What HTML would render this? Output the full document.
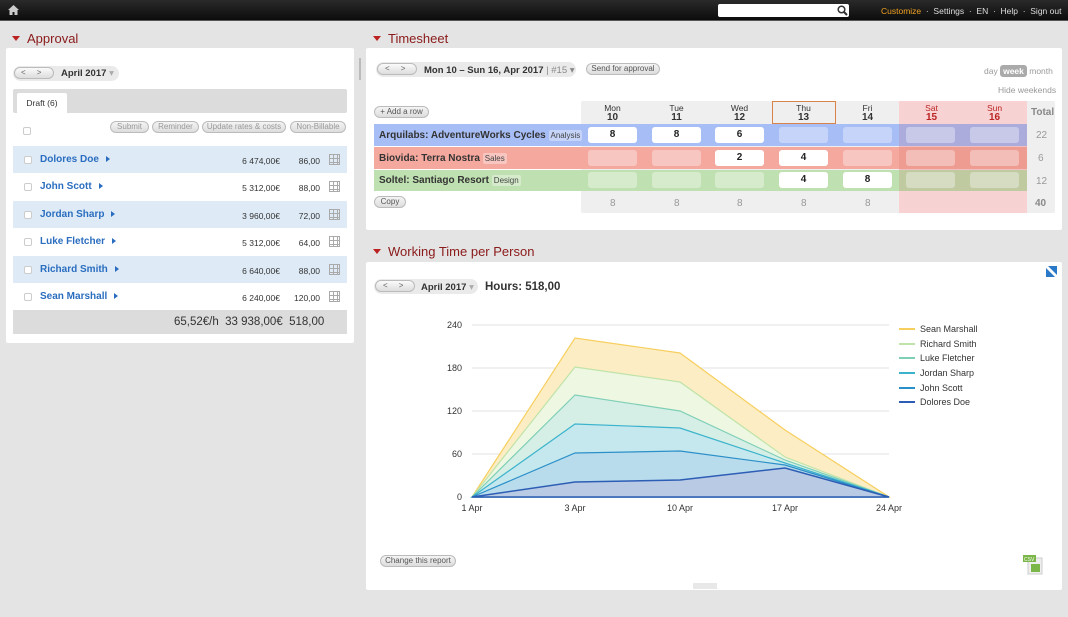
<!DOCTYPE html>
<html><head><meta charset="utf-8"><style>
*{box-sizing:border-box;margin:0;padding:0}
body{width:1068px;height:617px;background:#e4e4e4;font-family:"Liberation Sans",Arial,sans-serif;font-size:11px;color:#333;position:relative;overflow:hidden}
.abs{position:absolute}
.top{left:0;top:0;width:1068px;height:21px;background:linear-gradient(#2a2a2a,#0c0c0c);border-bottom:1px solid #555}
.search{left:718px;top:4px;width:131px;height:13px;background:#fff;border-radius:2px}
.nav{top:6px;color:#ddd;font-size:8.5px;white-space:nowrap}
.h{font-size:13px;color:#8b1a1a}
.h:before{content:"";display:inline-block;border-left:4px solid transparent;border-right:4px solid transparent;border-top:5px solid #b22;margin-right:7px;vertical-align:2px}
.panel{background:#fff;border-radius:2px}
.pill{background:linear-gradient(#f4f4f4,#ddd);border:1px solid #bbb;border-radius:9px;font-size:8px;color:#555;text-align:center;line-height:10px;height:12px;white-space:nowrap}
.pg{background:#eaeaea;border-radius:9px;height:15px}
.navbtn{border:1px solid #bbb;background:linear-gradient(#fafafa,#ddd);height:12px;border-radius:8px;width:40px}
.row{left:13px;width:334px;height:27px}
.name{color:#2a6dbf;font-weight:bold;font-size:10px;top:8px;left:27px}
.name:after{content:"";display:inline-block;border-top:3px solid transparent;border-bottom:3px solid transparent;border-left:4px solid #2a6dbf;margin-left:7px}
.cb{width:8px;height:8px;border:1px solid #ccc;border-radius:2px;background:#fff;left:11px;top:10px}
.num{font-size:8.5px;color:#333;top:10px;text-align:right}
.grid{width:11px;height:11px;top:8px;left:316px;background:
linear-gradient(90deg,transparent 3px,#aaa 3px,#aaa 4px,transparent 4px,transparent 7px,#aaa 7px,#aaa 8px,transparent 8px),
linear-gradient(transparent 3px,#aaa 3px,#aaa 4px,transparent 4px,transparent 7px,#aaa 7px,#aaa 8px,transparent 8px);border:1px solid #aaa}
.cell{width:49px;height:16px;border-radius:3px;background:#fff;font-weight:bold;font-size:10px;text-align:center;line-height:16px;color:#222;display:flex;align-items:center;justify-content:center}
.ghost{background:rgba(255,255,255,.35)}
.dh{text-align:center;font-size:8.5px;line-height:9px;width:63px}
.dh b{font-size:10px;display:block}
.tag{background:rgba(255,255,255,.35);font-size:8px;font-weight:normal;padding:1px 2px;border-radius:2px;color:#444}
</style></head><body>
<div class="abs top"></div>
<svg class="abs" style="left:8px;top:5px" width="11" height="10"><path d="M5.5 0L0 5h1.5v5h3V7h2v3h3V5H11z" fill="#ccc"/></svg>
<div class="abs search"></div>
<svg class="abs" style="left:837px;top:5px" width="11" height="11"><circle cx="4.5" cy="4.5" r="3.3" stroke="#333" stroke-width="1.5" fill="none"/><path d="M7 7l3 3" stroke="#333" stroke-width="2"/></svg>
<div class="abs nav" style="left:881px"><span style="color:#f0a020">Customize</span> &nbsp;·&nbsp; Settings &nbsp;·&nbsp; EN &nbsp;·&nbsp; Help &nbsp;·&nbsp; Sign out</div>

<div class="abs h" style="left:12px;top:31px">Approval</div>
<div class="abs panel" style="left:6px;top:48px;width:348px;height:295px"></div>
<div class="abs pg" style="left:13px;top:66px;width:106px"></div>
<div class="abs navbtn" style="left:14px;top:67px"></div>
<div class="abs" style="left:21px;top:68px;font-size:8px;color:#666">&lt; &nbsp;&nbsp;&nbsp; &gt;</div>
<div class="abs" style="left:61px;top:68px;font-size:9.5px;font-weight:bold">April 2017 <span style="color:#aaa;font-weight:normal">▾</span></div>
<div class="abs" style="left:13px;top:89px;width:334px;height:24px;background:#dcdcdc;border-radius:2px"></div>
<div class="abs" style="left:17px;top:93px;width:50px;height:21px;background:#fff;font-size:8.5px;text-align:center;line-height:20px;border-radius:2px 2px 0 0">Draft (6)</div>
<div class="abs cb" style="left:23px;top:127px"></div>
<div class="abs pill" style="left:110px;top:121px;width:39px;color:#999">Submit</div>
<div class="abs pill" style="left:152px;top:121px;width:47px;color:#999">Reminder</div>
<div class="abs pill" style="left:202px;top:121px;width:84px;color:#999">Update rates &amp; costs</div>
<div class="abs pill" style="left:290px;top:121px;width:56px;color:#999">Non-Billable</div>

<div class="abs row" style="top:146px;background:#deebf7"><div class="abs cb"></div><div class="abs name">Dolores Doe</div><div class="abs num" style="left:200px;width:67px">6 474,00€</div><div class="abs num" style="left:270px;width:37px">86,00</div><div class="abs grid"></div></div>
<div class="abs row" style="top:173px"><div class="abs cb"></div><div class="abs name">John Scott</div><div class="abs num" style="left:200px;width:67px">5 312,00€</div><div class="abs num" style="left:270px;width:37px">88,00</div><div class="abs grid"></div></div>
<div class="abs row" style="top:201px;background:#deebf7"><div class="abs cb"></div><div class="abs name">Jordan Sharp</div><div class="abs num" style="left:200px;width:67px">3 960,00€</div><div class="abs num" style="left:270px;width:37px">72,00</div><div class="abs grid"></div></div>
<div class="abs row" style="top:228px"><div class="abs cb"></div><div class="abs name">Luke Fletcher</div><div class="abs num" style="left:200px;width:67px">5 312,00€</div><div class="abs num" style="left:270px;width:37px">64,00</div><div class="abs grid"></div></div>
<div class="abs row" style="top:256px;background:#deebf7"><div class="abs cb"></div><div class="abs name">Richard Smith</div><div class="abs num" style="left:200px;width:67px">6 640,00€</div><div class="abs num" style="left:270px;width:37px">88,00</div><div class="abs grid"></div></div>
<div class="abs row" style="top:283px"><div class="abs cb"></div><div class="abs name">Sean Marshall</div><div class="abs num" style="left:200px;width:67px">6 240,00€</div><div class="abs num" style="left:270px;width:37px">120,00</div><div class="abs grid"></div></div>
<div class="abs" style="left:13px;top:310px;width:334px;height:24px;background:#dcdcdc"></div>
<div class="abs" style="left:174px;top:316px;font-size:11.5px;color:#333">65,52€/h &nbsp;33 938,00€ &nbsp;518,00</div>
<div class="abs" style="left:359px;top:58px;width:2px;height:22px;background:#bbb"></div>

<div class="abs h" style="left:373px;top:31px">Timesheet</div>
<div class="abs panel" style="left:366px;top:48px;width:696px;height:182px"></div>
<div class="abs pg" style="left:376px;top:62px;width:200px"></div>
<div class="abs navbtn" style="left:377px;top:63px"></div>
<div class="abs" style="left:385px;top:64px;font-size:8px;color:#666">&lt; &nbsp;&nbsp;&nbsp; &gt;</div>
<div class="abs" style="left:424px;top:65px;font-size:9.5px;font-weight:bold">Mon 10 – Sun 16, Apr 2017 <span style="color:#888;font-weight:normal">| #15 ▾</span></div>
<div class="abs pill" style="left:586px;top:63px;width:74px">Send for approval</div>
<div class="abs" style="left:984px;top:66px;font-size:8.5px;color:#999">day <span style="background:#aaa;color:#fff;font-weight:bold;padding:1px 3px;border-radius:3px">week</span> month</div>
<div class="abs" style="left:998px;top:85px;font-size:8.5px;color:#999">Hide weekends</div>
<div class="abs pill" style="left:374px;top:106px;width:55px">+ Add a row</div>

<div class="abs" style="left:581px;top:101px;width:474px;height:112px;background:#efefef;border-radius:2px"></div>
<div class="abs" style="left:899px;top:101px;width:128px;height:112px;background:#fbe0e0;background-image:radial-gradient(#efb0b0 0.6px,transparent 0.8px);background-size:2px 2px"></div>
<div class="abs dh" style="left:581px;top:104px">Mon<b>10</b></div>
<div class="abs dh" style="left:645px;top:104px">Tue<b>11</b></div>
<div class="abs dh" style="left:708px;top:104px">Wed<b>12</b></div>
<div class="abs" style="left:772px;top:101px;width:64px;height:23px;border:1px solid #d9834a"></div>
<div class="abs dh" style="left:772px;top:104px">Thu<b>13</b></div>
<div class="abs dh" style="left:836px;top:104px">Fri<b>14</b></div>
<div class="abs dh" style="left:900px;top:104px;color:#b22">Sat<b>15</b></div>
<div class="abs dh" style="left:963px;top:104px;color:#b22">Sun<b>16</b></div>
<div class="abs" style="left:1031px;top:107px;font-size:10px;font-weight:bold;color:#888">Total</div>

<div class="abs" style="left:374px;top:124px;width:653px;height:22px;background:#a6bdf5"></div>
<div class="abs" style="left:374px;top:147px;width:653px;height:22px;background:#f5a89e"></div>
<div class="abs" style="left:374px;top:170px;width:653px;height:21px;background:#bfe0b0"></div>
<div class="abs" style="left:899px;top:124px;width:128px;height:67px;background:rgba(200,80,80,.15)"></div>
<div class="abs" style="left:379px;top:130px;font-size:10px;font-weight:bold">Arquilabs: AdventureWorks Cycles <span class="tag">Analysis</span></div>
<div class="abs" style="left:379px;top:153px;font-size:10px;font-weight:bold">Biovida: Terra Nostra <span class="tag">Sales</span></div>
<div class="abs" style="left:379px;top:175px;font-size:10px;font-weight:bold">Soltel: Santiago Resort <span class="tag">Design</span></div>

<div class="abs cell" style="left:588px;top:127px">8</div>
<div class="abs cell" style="left:652px;top:127px">8</div>
<div class="abs cell" style="left:715px;top:127px">6</div>
<div class="abs cell ghost" style="left:779px;top:127px"></div>
<div class="abs cell ghost" style="left:843px;top:127px"></div>
<div class="abs cell ghost" style="left:906px;top:127px"></div>
<div class="abs cell ghost" style="left:970px;top:127px"></div>
<div class="abs cell ghost" style="left:588px;top:150px"></div>
<div class="abs cell ghost" style="left:652px;top:150px"></div>
<div class="abs cell" style="left:715px;top:150px">2</div>
<div class="abs cell" style="left:779px;top:150px">4</div>
<div class="abs cell ghost" style="left:843px;top:150px"></div>
<div class="abs cell ghost" style="left:906px;top:150px"></div>
<div class="abs cell ghost" style="left:970px;top:150px"></div>
<div class="abs cell ghost" style="left:588px;top:172px"></div>
<div class="abs cell ghost" style="left:652px;top:172px"></div>
<div class="abs cell ghost" style="left:715px;top:172px"></div>
<div class="abs cell" style="left:779px;top:172px">4</div>
<div class="abs cell" style="left:843px;top:172px">8</div>
<div class="abs cell ghost" style="left:906px;top:172px"></div>
<div class="abs cell ghost" style="left:970px;top:172px"></div>
<div class="abs" style="left:1036px;top:130px;font-size:10px;color:#999">22</div>
<div class="abs" style="left:1038px;top:153px;font-size:10px;color:#999">6</div>
<div class="abs" style="left:1036px;top:176px;font-size:10px;color:#999">12</div>
<div class="abs pill" style="left:374px;top:196px;width:32px">Copy</div>
<div class="abs" style="left:610px;top:198px;font-size:10px;color:#999">8</div>
<div class="abs" style="left:674px;top:198px;font-size:10px;color:#999">8</div>
<div class="abs" style="left:737px;top:198px;font-size:10px;color:#999">8</div>
<div class="abs" style="left:801px;top:198px;font-size:10px;color:#999">8</div>
<div class="abs" style="left:865px;top:198px;font-size:10px;color:#999">8</div>
<div class="abs" style="left:1035px;top:198px;font-size:10px;color:#888;font-weight:bold">40</div>

<div class="abs h" style="left:373px;top:244px">Working Time per Person</div>
<div class="abs panel" style="left:366px;top:262px;width:696px;height:328px"></div>
<svg class="abs" style="left:1046px;top:266px" width="11" height="11"><rect width="11" height="11" fill="#2a78c8"/><path d="M0 2L9 11H11V9L2 0H0z" fill="#fff"/></svg>
<div class="abs pg" style="left:374px;top:279px;width:104px"></div>
<div class="abs navbtn" style="left:375px;top:280px"></div>
<div class="abs" style="left:383px;top:281px;font-size:8px;color:#666">&lt; &nbsp;&nbsp;&nbsp; &gt;</div>
<div class="abs" style="left:421px;top:282px;font-size:9.5px;font-weight:bold">April 2017 <span style="color:#aaa;font-weight:normal">▾</span></div>
<div class="abs" style="left:485px;top:281px;font-size:11.5px;font-weight:bold">Hours: 518,00</div>

<svg class="abs" style="left:366px;top:262px" width="696" height="328" font-family="Liberation Sans, Arial, sans-serif" font-size="9" fill="#333">
<g stroke="#e0e0e0" stroke-width="1"><path d="M106 63H523M106 106H523M106 149H523M106 192H523"/></g>
<path d="M106 235H523" stroke="#999"/>
<g text-anchor="end"><text x="96" y="66">240</text><text x="96" y="109">180</text><text x="96" y="152">120</text><text x="96" y="195">60</text><text x="96" y="238">0</text></g>
<g text-anchor="middle"><text x="106" y="249">1 Apr</text><text x="209" y="249">3 Apr</text><text x="314" y="249">10 Apr</text><text x="419" y="249">17 Apr</text><text x="523" y="249">24 Apr</text></g>
<path d="M106 235L209 76L314 91L419 168L523 235Z" fill="#fcedc4" stroke="#f7cf5f" stroke-width="1.2"/>
<path d="M106 235L209 105L314 120L419 195L523 235Z" fill="#eef7e2" stroke="#bfe3a8" stroke-width="1.2"/>
<path d="M106 235L209 133L314 149L419 198L523 235Z" fill="#d6efe6" stroke="#7fcfb7" stroke-width="1.2"/>
<path d="M106 235L209 162L314 166L419 201L523 235Z" fill="#c5e8ee" stroke="#3cb3cc" stroke-width="1.2"/>
<path d="M106 235L209 191L314 189L419 203L523 235Z" fill="#b8dcec" stroke="#2b8fc8" stroke-width="1.2"/>
<path d="M106 235L209 220L314 218L419 206L523 235Z" fill="#b9cbe4" stroke="#2e5db5" stroke-width="1.5"/>
<g stroke-width="2"><path d="M533 67h16" stroke="#f7cf5f"/><path d="M533 82h16" stroke="#bfe3a8"/><path d="M533 96h16" stroke="#7fcfb7"/><path d="M533 111h16" stroke="#3cb3cc"/><path d="M533 126h16" stroke="#2b8fc8"/><path d="M533 140h16" stroke="#2e5db5"/></g>
<g font-size="9"><text x="554" y="70">Sean Marshall</text><text x="554" y="85">Richard Smith</text><text x="554" y="99">Luke Fletcher</text><text x="554" y="114">Jordan Sharp</text><text x="554" y="129">John Scott</text><text x="554" y="143">Dolores Doe</text></g>
</svg>
<div class="abs pill" style="left:380px;top:555px;width:76px">Change this report</div>
<svg class="abs" style="left:1023px;top:555px" width="20" height="20"><rect x="5" y="3" width="14" height="16" fill="#eee" stroke="#ccc"/><rect x="0" y="0" width="13" height="7" fill="#7ab648"/><text x="1" y="6" font-size="5" fill="#fff" font-family="Liberation Sans">CSV</text><rect x="8" y="9" width="9" height="8" fill="#7ab648"/></svg>
<div class="abs" style="left:693px;top:583px;width:24px;height:6px;background:#e8e8e8"></div>
</body></html>
